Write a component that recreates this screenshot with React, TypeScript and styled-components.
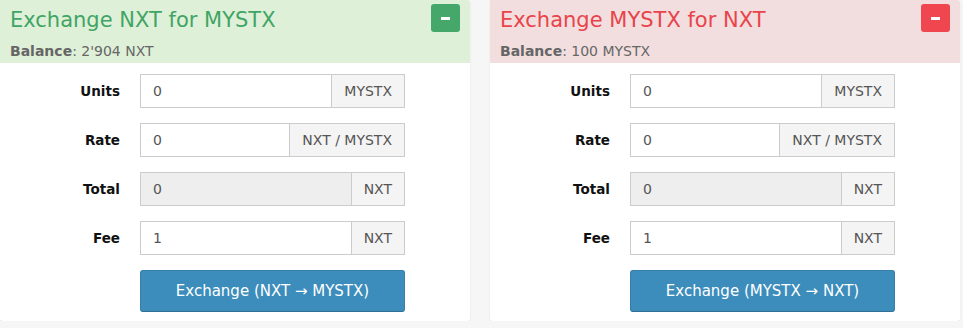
import React from "react";
import styled, { createGlobalStyle } from "styled-components";

const Global = createGlobalStyle`
  html, body { margin: 0; padding: 0; background: #f6f6f6; }
  body { font-family: "DejaVu Sans", Verdana, sans-serif; }
  * { box-sizing: border-box; }
`;

const Page = styled.div`
  display: grid;
  grid-template-columns: 470px 470px;
  gap: 20px;
  align-items: start;
`;

const Panel = styled.div`
  background: #fff;
  border-radius: 0 3px 3px 3px;
  box-shadow: 0 1px 2px rgba(0, 0, 0, 0.08);
  height: 321px;
  overflow: hidden;
`;

const Header = styled.div<{ $tone: "green" | "red" }>`
  background: ${(p) => (p.$tone === "green" ? "#dff0d8" : "#f2dede")};
  height: 63px;
  padding: 4px 10px 0 10px;
  display: grid;
  grid-template-columns: 1fr auto;
  grid-template-rows: 28px auto;
  row-gap: 11px;
`;

const Title = styled.h3<{ $tone: "green" | "red" }>`
  margin: 0;
  font-size: 21px;
  font-weight: normal;
  line-height: 32px;
  color: ${(p) => (p.$tone === "green" ? "#3fa565" : "#e9434b")};
  white-space: nowrap;
`;

const ToggleButton = styled.button<{ $tone: "green" | "red" }>`
  width: 29px;
  height: 28px;
  border: none;
  border-radius: 3px;
  background: ${(p) => (p.$tone === "green" ? "#45a86a" : "#ef4650")};
  display: flex;
  align-items: center;
  justify-content: center;
  padding: 0;
  cursor: pointer;
`;

const MinusBar = styled.span`
  display: block;
  width: 9px;
  height: 3px;
  background: #fff;
`;

const Balance = styled.div`
  grid-column: 1 / span 2;
  font-size: 14px;
  color: #666;
  line-height: 16px;
  b { font-weight: bold; }
`;

const Body = styled.div`
  padding: 11px 0 0 0;
  display: grid;
  grid-template-columns: 120px 265px;
  column-gap: 20px;
  row-gap: 15px;
  align-items: center;
`;

const Label = styled.label`
  text-align: right;
  font-size: 13.5px;
  font-weight: bold;
  color: #111;
`;

const InputGroup = styled.div`
  display: flex;
  height: 34px;
`;

const Input = styled.div<{ $disabled?: boolean }>`
  flex: 1;
  border: 1px solid #ccc;
  border-right: none;
  background: ${(p) => (p.$disabled ? "#eeeeee" : "#fff")};
  color: #555;
  font-size: 14px;
  padding: 0 12px;
  display: flex;
  align-items: center;
`;

const Addon = styled.span`
  border: 1px solid #ccc;
  background: #f4f4f4;
  color: #555;
  font-size: 14px;
  padding: 0 12px;
  display: flex;
  align-items: center;
  white-space: nowrap;
`;

const SubmitButton = styled.button`
  grid-column: 2;
  height: 42px;
  background: #3c8dbc;
  border: 1px solid #367fa9;
  border-bottom-color: #2f6f95;
  border-radius: 3px;
  color: #fff;
  font-family: "DejaVu Sans", Verdana, sans-serif;
  font-size: 15px;
  cursor: pointer;
`;

type Row = { label: string; value: string; unit: string; disabled?: boolean };

function ExchangeBox(props: {
  tone: "green" | "red";
  title: string;
  balance: string;
  rows: Row[];
  action: string;
}) {
  return (
    <Panel>
      <Header $tone={props.tone}>
        <Title $tone={props.tone}>{props.title}</Title>
        <ToggleButton $tone={props.tone} aria-label="collapse">
          <MinusBar />
        </ToggleButton>
        <Balance>
          <b>Balance</b>: {props.balance}
        </Balance>
      </Header>
      <Body>
        {props.rows.map((r) => (
          <React.Fragment key={r.label}>
            <Label>{r.label}</Label>
            <InputGroup>
              <Input $disabled={r.disabled}>{r.value}</Input>
              <Addon>{r.unit}</Addon>
            </InputGroup>
          </React.Fragment>
        ))}
        <SubmitButton>{props.action}</SubmitButton>
      </Body>
    </Panel>
  );
}

export default function App() {
  return (
    <>
      <Global />
      <Page>
        <ExchangeBox
          tone="green"
          title="Exchange NXT for MYSTX"
          balance="2'904 NXT"
          rows={[
            { label: "Units", value: "0", unit: "MYSTX" },
            { label: "Rate", value: "0", unit: "NXT / MYSTX" },
            { label: "Total", value: "0", unit: "NXT", disabled: true },
            { label: "Fee", value: "1", unit: "NXT" },
          ]}
          action="Exchange (NXT → MYSTX)"
        />
        <ExchangeBox
          tone="red"
          title="Exchange MYSTX for NXT"
          balance="100 MYSTX"
          rows={[
            { label: "Units", value: "0", unit: "MYSTX" },
            { label: "Rate", value: "0", unit: "NXT / MYSTX" },
            { label: "Total", value: "0", unit: "NXT", disabled: true },
            { label: "Fee", value: "1", unit: "NXT" },
          ]}
          action="Exchange (MYSTX → NXT)"
        />
      </Page>
    </>
  );
}
